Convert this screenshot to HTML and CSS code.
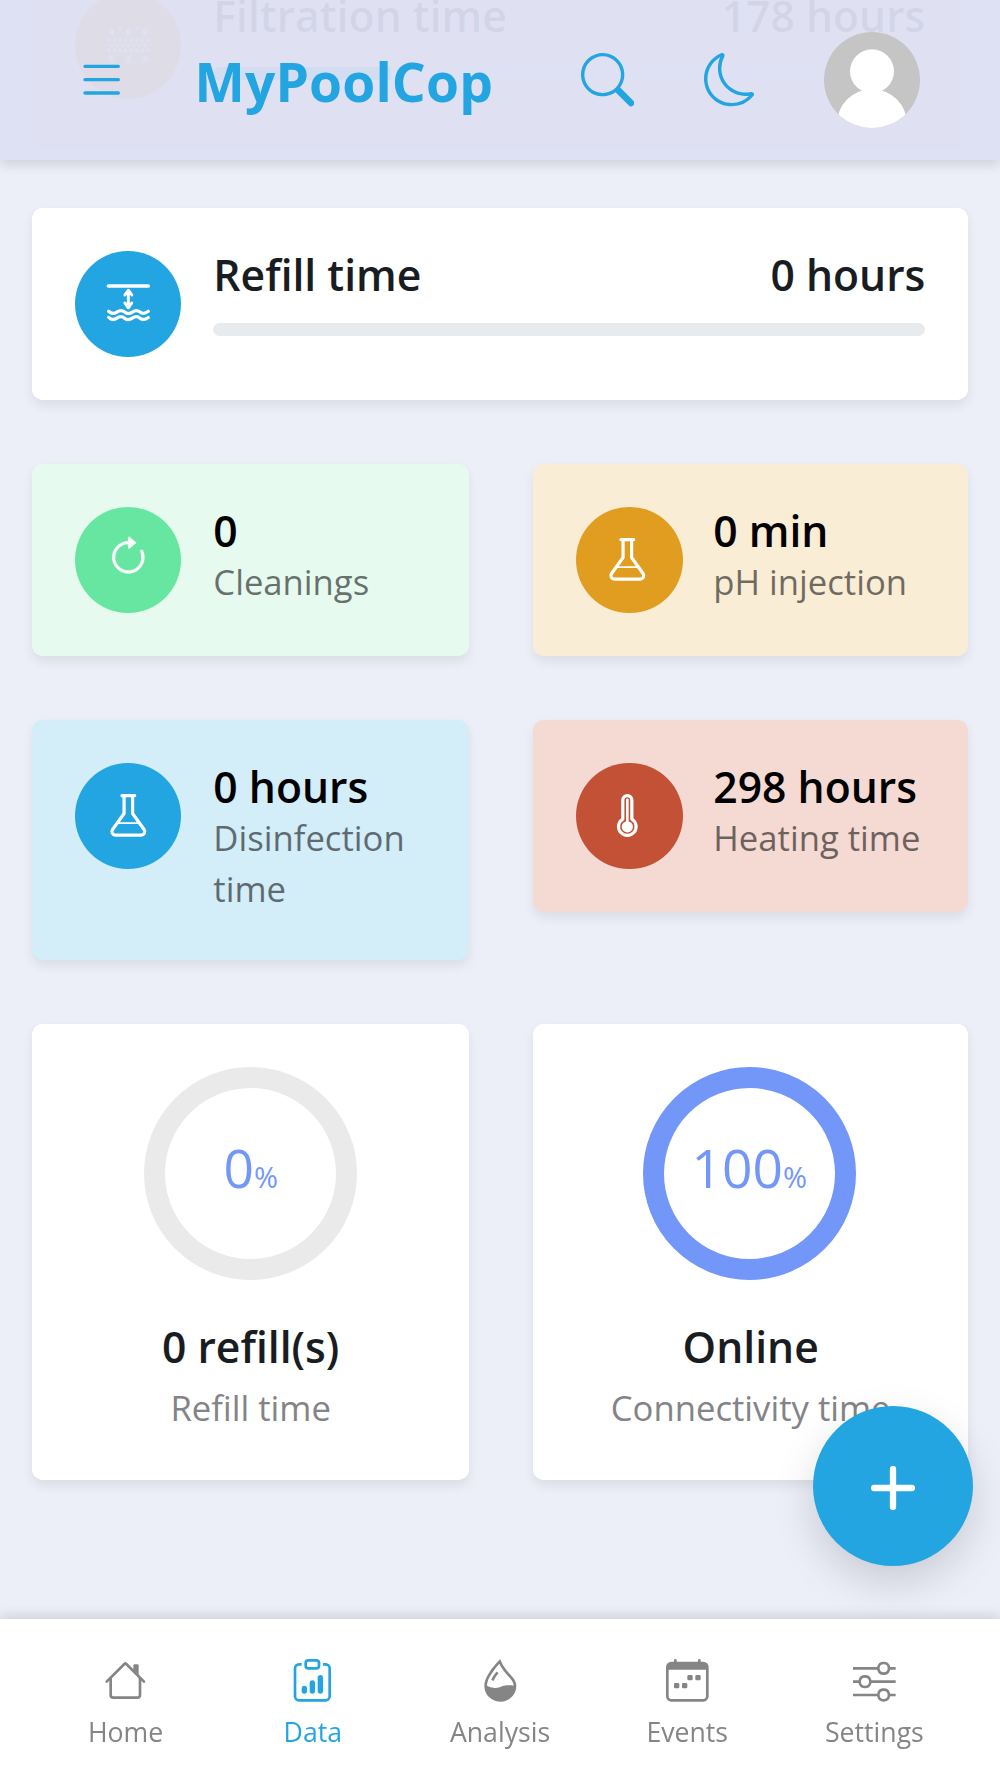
FILE: index.html
```html
<!DOCTYPE html>
<html lang="en">
<head>
  <meta charset="UTF-8">
  <meta name="viewport" content="width=device-width, initial-scale=1.0">
  <title>MyPoolCop</title>
  <link rel="stylesheet" href="styles.css">
</head>
<body>
  <header class="header">
    <svg class="icon-lg menu" viewBox="0 0 16 16"><path d="M2.5 12a.5.5 0 0 1 .5-.5h10a.5.5 0 0 1 0 1H3a.5.5 0 0 1-.5-.5zm0-4a.5.5 0 0 1 .5-.5h10a.5.5 0 0 1 0 1H3a.5.5 0 0 1-.5-.5zm0-4a.5.5 0 0 1 .5-.5h10a.5.5 0 0 1 0 1H3a.5.5 0 0 1-.5-.5z"/></svg>
    <h1>MyPoolCop</h1>
    <svg class="icon-lg search" viewBox="0 0 16 16"><path d="M11.742 10.344a6.5 6.5 0 1 0-1.397 1.398h-.001c.03.04.062.078.098.115l3.85 3.85a1 1 0 0 0 1.415-1.414l-3.85-3.85a1.007 1.007 0 0 0-.115-.1zM12 6.5a5.5 5.5 0 1 1-11 0 5.5 5.5 0 0 1 11 0z"/></svg>
    <svg class="icon-lg moon" viewBox="0 0 16 16"><path d="M6 .278a.768.768 0 0 1 .08.858 7.208 7.208 0 0 0-.878 3.46c0 4.021 3.278 7.277 7.318 7.277.527 0 1.04-.055 1.533-.16a.787.787 0 0 1 .81.316.733.733 0 0 1-.031.893A8.349 8.349 0 0 1 8.344 16C3.734 16 0 12.286 0 7.71 0 4.266 2.114 1.312 5.124.06A.752.752 0 0 1 6 .278zM4.858 1.311A7.269 7.269 0 0 0 1.025 7.71c0 4.02 3.279 7.276 7.319 7.276a7.316 7.316 0 0 0 5.205-2.162c-.337.042-.68.063-1.029.063-4.61 0-8.343-3.714-8.343-8.29 0-1.167.242-2.278.681-3.286z"/></svg>
    <svg class="avatar" viewBox="0 0 96 96"><rect width="96" height="96" fill="#c5c5c5"/><circle cx="48" cy="39.3" r="22" fill="#fff"/><circle cx="48" cy="92" r="35" fill="#fff"/></svg>
  </header>

  <main class="content">
    <section class="card wide filtration">
      <div class="round amber">
        <svg class="icon" viewBox="0 0 16 16">
          <g fill="#fff">
            <ellipse cx="1.6" cy="2.8" rx="1" ry="1.4"/><ellipse cx="8" cy="2.8" rx="1" ry="1.4"/><ellipse cx="14.3" cy="2.8" rx="1" ry="1.4"/>
            <circle cx="4.9" cy="1.6" r=".7"/><circle cx="11.2" cy="1.6" r=".7"/>
            <ellipse cx="1.6" cy="13.2" rx="1" ry="1.4"/><ellipse cx="8" cy="13.2" rx="1" ry="1.4"/><ellipse cx="14.3" cy="13.2" rx="1" ry="1.4"/>
          </g>
          <g stroke="#fff" stroke-width="1.4" stroke-linecap="round" stroke-dasharray="0 2.07"><path d="M.8 6.1h14.6M1.8 8h13M.8 9.9h14.6"/></g>
        </svg>
      </div>
      <div class="details">
        <div class="line"><h2>Filtration time</h2><h2>178 hours</h2></div>
        <div class="progress"><div class="bar" style="width: 25%"></div></div>
      </div>
    </section>

    <section class="card wide">
      <div class="round blue">
        <svg class="icon stroked" viewBox="0 0 16 16">
          <path d="M.5 1.1h15" stroke-width="1.3"/>
          <path d="M8 2.8v6.3M6.7 4.5 8 2.7l1.3 1.8M6.7 7.5 8 9.3l1.3-1.8" stroke-width="1.1"/>
          <path d="M.6 10.6Q2.1 12 3.7 10.9T6.6 10.9T9.5 10.9T12.4 10.9T15.5 10.6M.6 12.9Q2.1 14.3 3.7 13.2T6.6 13.2T9.5 13.2T12.4 13.2T15.5 12.9"/>
        </svg>
      </div>
      <div class="details">
        <div class="line"><h2>Refill time</h2><h2>0 hours</h2></div>
        <div class="progress"></div>
      </div>
    </section>

    <div class="grid">
      <section class="card tile tile-green">
        <div class="round green">
          <svg class="icon spin" viewBox="0 0 16 16"><path d="M8 3a5 5 0 1 0 4.546 2.914.5.5 0 0 1 .908-.417A6 6 0 1 1 8 2v1z"/><path d="M8 4.466V.534a.25.25 0 0 1 .41-.192l2.36 1.966c.12.1.12.284 0 .384L8.41 4.658A.25.25 0 0 1 8 4.466z"/></svg>
        </div>
        <div class="info"><h2>0</h2><p>Cleanings</p></div>
      </section>

      <section class="card tile tile-amber">
        <div class="round amber">
          <svg class="icon stroked flask" viewBox="0 0 16 16"><path d="M5.6.6h4.8M6.4.8v6.5L2.1 13.3c-.7 1 0 2.1 1.1 2.1h9.6c1.1 0 1.8-1.1 1.1-2.1L9.6 7.3V.8"/><path d="M4.2 10.9h7.6" stroke-width=".7"/></svg>
        </div>
        <div class="info"><h2>0 min</h2><p>pH injection</p></div>
      </section>

      <section class="card tile tile-blue">
        <div class="round blue">
          <svg class="icon stroked flask" viewBox="0 0 16 16"><path d="M5.6.6h4.8M6.4.8v6.5L2.1 13.3c-.7 1 0 2.1 1.1 2.1h9.6c1.1 0 1.8-1.1 1.1-2.1L9.6 7.3V.8"/><path d="M4.2 10.9h7.6" stroke-width=".7"/></svg>
        </div>
        <div class="info"><h2>0 hours</h2><p>Disinfection time</p></div>
      </section>

      <section class="card tile tile-red">
        <div class="round red">
          <svg class="icon stroked thermo" viewBox="0 0 16 16"><path d="M6.3 2.3a1.7 1.7 0 0 1 3.4 0v7.1a3.3 3.3 0 1 1-3.4 0z"/><path d="M8 2.2V12" stroke-width="1"/><circle cx="8" cy="12.3" r="2.1" fill="#fff" stroke="none"/></svg>
        </div>
        <div class="info"><h2>298 hours</h2><p>Heating time</p></div>
      </section>

      <section class="card stat">
        <div class="ring"><span>0</span><small>%</small></div>
        <h2>0 refill(s)</h2>
        <p>Refill time</p>
      </section>

      <section class="card stat">
        <div class="ring full"><span>100</span><small>%</small></div>
        <h2>Online</h2>
        <p>Connectivity time</p>
      </section>
    </div>
  </main>

  <button class="fab" aria-label="Add">
    <svg viewBox="0 0 44 44"><path d="M22 3v38M3 22h38"/></svg>
  </button>

  <nav class="tabs">
    <a class="tab">
      <svg class="icon" viewBox="0 0 16 16"><path d="M2 13.5V7h1v6.5a.5.5 0 0 0 .5.5h9a.5.5 0 0 0 .5-.5V7h1v6.5a1.5 1.5 0 0 1-1.5 1.5h-9A1.5 1.5 0 0 1 2 13.5zm11-11V6l-2-2V2.5a.5.5 0 0 1 .5-.5h1a.5.5 0 0 1 .5.5z"/><path d="M7.293 1.5a1 1 0 0 1 1.414 0l6.647 6.646a.5.5 0 0 1-.708.708L8 2.207 1.354 8.854a.5.5 0 1 1-.708-.708L7.293 1.5z"/></svg>
      <span>Home</span>
    </a>
    <a class="tab active">
      <svg class="icon" viewBox="0 0 16 16"><path d="M4 11a1 1 0 1 1 2 0v1a1 1 0 1 1-2 0v-1zm6-4a1 1 0 1 1 2 0v5a1 1 0 1 1-2 0V7zM7 9a1 1 0 0 1 2 0v3a1 1 0 1 1-2 0V9z"/><path d="M4 1.5H3a2 2 0 0 0-2 2V14a2 2 0 0 0 2 2h10a2 2 0 0 0 2-2V3.5a2 2 0 0 0-2-2h-1v1h1a1 1 0 0 1 1 1V14a1 1 0 0 1-1 1H3a1 1 0 0 1-1-1V3.5a1 1 0 0 1 1-1h1v-1z"/><path d="M9.5 1a.5.5 0 0 1 .5.5v1a.5.5 0 0 1-.5.5h-3a.5.5 0 0 1-.5-.5v-1a.5.5 0 0 1 .5-.5h3zm-3-1A1.5 1.5 0 0 0 5 1.5v1A1.5 1.5 0 0 0 6.5 4h3A1.5 1.5 0 0 0 11 2.5v-1A1.5 1.5 0 0 0 9.5 0h-3z"/></svg>
      <span>Data</span>
    </a>
    <a class="tab">
      <svg class="icon" viewBox="0 0 16 16"><path fill-rule="evenodd" d="M7.21.8C7.69.295 8 0 8 0c.109.363.234.708.371 1.038.812 1.946 2.073 3.35 3.197 4.6C12.878 7.096 14 8.345 14 10a6 6 0 0 1-12 0C2 6.668 5.58 2.517 7.21.8zm.413 1.021A31.25 31.25 0 0 0 5.794 3.99c-.726.95-1.436 2.008-1.96 3.07C3.304 8.133 3 9.138 3 10c0 0 2.5 1.5 5 .5s5-.5 5-.5c0-1.201-.796-2.157-2.181-3.7l-.03-.032C9.75 5.11 8.5 3.72 7.623 1.82z"/><path d="M4.553 7.776c.82-1.641 1.717-2.753 2.093-3.13l.708.708c-.29.29-1.128 1.311-1.907 2.87l-.894-.448z"/></svg>
      <span>Analysis</span>
    </a>
    <a class="tab">
      <svg class="icon" viewBox="0 0 16 16"><path d="M11 6.5a.5.5 0 0 1 .5-.5h1a.5.5 0 0 1 .5.5v1a.5.5 0 0 1-.5.5h-1a.5.5 0 0 1-.5-.5v-1zm-3 0a.5.5 0 0 1 .5-.5h1a.5.5 0 0 1 .5.5v1a.5.5 0 0 1-.5.5h-1a.5.5 0 0 1-.5-.5v-1zm-5 3a.5.5 0 0 1 .5-.5h1a.5.5 0 0 1 .5.5v1a.5.5 0 0 1-.5.5h-1a.5.5 0 0 1-.5-.5v-1zm3 0a.5.5 0 0 1 .5-.5h1a.5.5 0 0 1 .5.5v1a.5.5 0 0 1-.5.5h-1a.5.5 0 0 1-.5-.5v-1z"/><path d="M3.5 0a.5.5 0 0 1 .5.5V1h8V.5a.5.5 0 0 1 1 0V1h1a2 2 0 0 1 2 2v11a2 2 0 0 1-2 2H2a2 2 0 0 1-2-2V3a2 2 0 0 1 2-2h1V.5a.5.5 0 0 1 .5-.5zM1 4v10a1 1 0 0 0 1 1h12a1 1 0 0 0 1-1V4H1z"/></svg>
      <span>Events</span>
    </a>
    <a class="tab">
      <svg class="icon" viewBox="0 0 16 16"><path fill-rule="evenodd" d="M11.5 2a1.5 1.5 0 1 0 0 3 1.5 1.5 0 0 0 0-3zM9.05 3a2.5 2.5 0 0 1 4.9 0H16v1h-2.05a2.5 2.5 0 0 1-4.9 0H0V3h9.05zM4.5 7a1.5 1.5 0 1 0 0 3 1.5 1.5 0 0 0 0-3zM2.05 8a2.5 2.5 0 0 1 4.9 0H16v1H6.95a2.5 2.5 0 0 1-4.9 0H0V8h2.05zm9.45 4a1.5 1.5 0 1 0 0 3 1.5 1.5 0 0 0 0-3zm-2.45 1a2.5 2.5 0 0 1 4.9 0H16v1h-2.05a2.5 2.5 0 0 1-4.9 0H0v-1h9.05z"/></svg>
      <span>Settings</span>
    </a>
  </nav>
</body>
</html>
```

FILE: styles.css
```css
/* Base */
* { box-sizing: border-box; margin: 0; padding: 0; }
body { height: 1778px; overflow: hidden; background: #eceff8; color: #191d21; font-family: 'Open Sans', sans-serif; }
svg { display: block; fill: currentColor; flex: none; }
h2 { font-size: 42.67px; font-weight: 600; line-height: 48px; }
p { font-size: 34.67px; line-height: 50.67px; }
.icon { width: 42.67px; height: 42.67px; overflow: visible; }
.icon-lg { width: 53.33px; height: 53.33px; }
.stroked { fill: none; stroke: #fff; stroke-width: 1.2; stroke-linecap: round; stroke-linejoin: round; }

/* Header */
.header { position: fixed; top: 0; left: 0; z-index: 2; width: 100%; height: 160px; padding: 0 80px 0 74.67px; display: flex; align-items: center; background: rgba(221,223,242,.95); color: #22a5e0; box-shadow: 0 5px 11px rgba(0,0,0,.12); }
.header h1 { width: 387px; margin-left: 66.5px; padding-top: 3px; font-size: 53.33px; font-weight: 700; line-height: 64px; letter-spacing: .003em; }
.search { margin-left: -.5px; }
.moon { margin-left: 69.5px; }
.avatar { width: 96px; height: 96px; margin-left: auto; border-radius: 50%; }

/* Cards. The list is scrolled under the header */
.content { margin-top: -48px; padding: 0 32px; display: grid; gap: 64px; }
.card { border-radius: 10.67px; background: #fff; box-shadow: 0 5.33px 10.67px rgba(0,0,0,.07); padding: 42.67px; }
.wide { height: 192px; display: flex; gap: 32px; }
.details { flex: 1; }
.line { display: flex; justify-content: space-between; }
.progress { height: 13.33px; margin-top: 24px; border-radius: 7px; background: #e7ebee; overflow: hidden; }
.bar { height: 100%; background: #22a5e0; }
.filtration { padding-top: 40px; }
.filtration .progress { margin-top: 26.67px; }

.round { flex: none; width: 106.67px; height: 106.67px; border-radius: 50%; display: grid; place-items: center; color: #fff; }
.green { background: #67e6a2; }
.amber { background: #e09d20; }
.blue { background: #22a5e0; }
.red { background: #c25135; }

.grid { display: grid; grid-template-columns: 437.33px 434.67px; gap: 64px; align-items: start; }
.tile { display: flex; gap: 32px; color: #000; }
.tile:nth-child(even) { gap: 30.67px; }
.tile .info { padding-bottom: 2.8px; margin-right: -20px; }
.tile p { margin-top: 2.5px; opacity: .55; }
.tile .icon { margin-bottom: 2px; }
.tile:nth-child(even) .icon { margin-right: 3px; }
.tile .spin { margin-bottom: 5px; stroke: currentColor; stroke-width: .2; }
.tile-green { background: #e6faf0; }
.tile-amber { background: #f9edd6; }
.tile-blue { background: #d3edf9; }
.tile-red { background: #f4dad3; }

/* Percentage rings */
.stat { height: 456px; display: flex; flex-direction: column; align-items: center; }
.ring { width: 213.33px; height: 213.33px; border: 21.33px solid #eaeaea; border-radius: 50%; display: flex; justify-content: center; align-items: baseline; padding-top: 43.5px; margin-bottom: 42.67px; color: #7297f9; font-size: 53.33px; line-height: 73px; }
.ring small { font-size: 29px; }
.ring.full { border-color: #7297f9; margin-right: 2.67px; }
.stat p { margin-top: 12.8px; color: #828487; }

/* Floating button and bottom tabs */
.fab { position: fixed; right: 26.67px; bottom: 212.5px; width: 160px; height: 160px; border: none; border-radius: 50%; background: #22a5e0; display: grid; place-items: center; box-shadow: 0 16px 42px rgba(0,0,0,.15); }
.fab svg { width: 44px; height: 44px; margin-top: 5px; stroke: #fff; stroke-width: 6.3; stroke-linecap: round; }
.tabs { position: fixed; bottom: 0; left: 0; width: 100%; height: 159.33px; padding: 40.33px 32px 0; display: flex; background: #fff; color: #858585; box-shadow: 0 -4px 11px rgba(0,0,0,.12); }
.tab { flex: 1; display: flex; flex-direction: column; align-items: center; gap: 12.7px; font-size: 26.67px; line-height: 36px; }
.tab.active { color: #22a5e0; }
```
